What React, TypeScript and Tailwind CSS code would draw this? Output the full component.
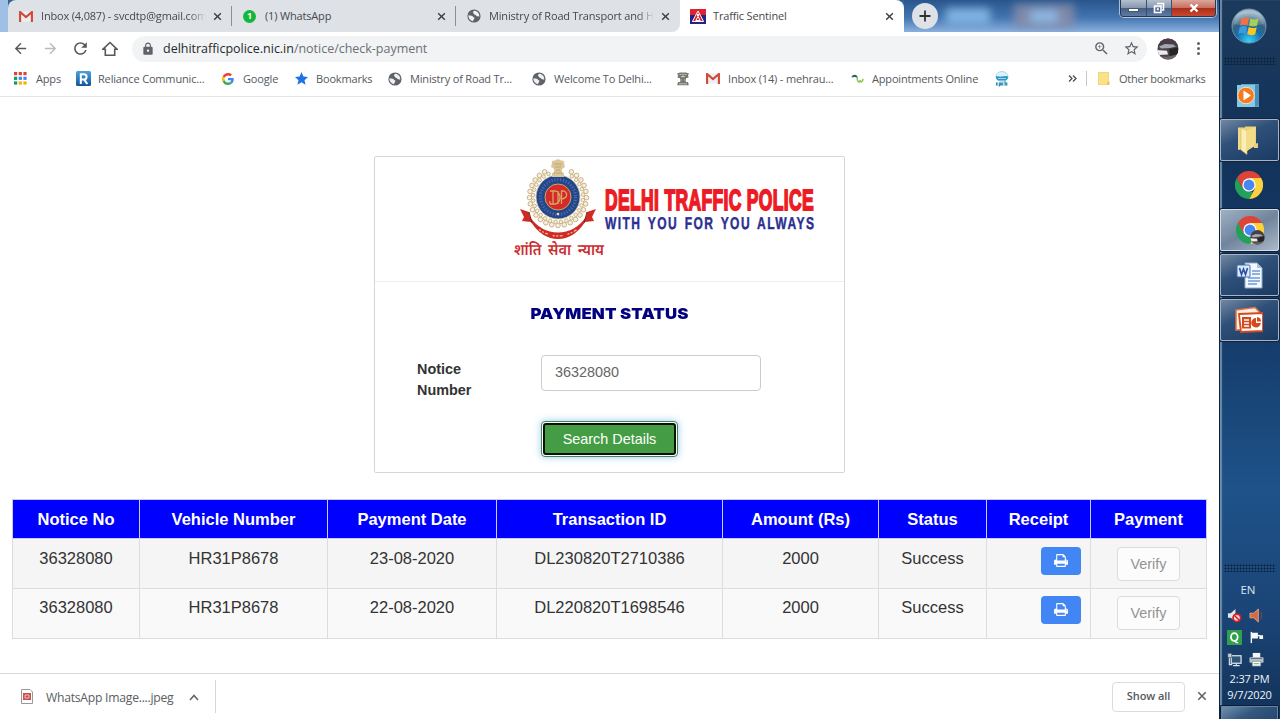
import type { ReactNode } from "react";
import { MdLock, MdStarBorder, MdZoomIn, MdArrowBack, MdArrowForward, MdRefresh } from "react-icons/md";

function XIcon({ className = "" }: { className?: string }) {
  return (
    <svg viewBox="0 0 10 10" className={"shrink-0 " + className}>
      <path d="M1.3 1.3 8.7 8.7M8.7 1.3 1.3 8.7" stroke="currentColor" strokeWidth="1.6" />
    </svg>
  );
}

function Printer() {
  return (
    <svg viewBox="0 0 1664 1792" className="h-[15px] w-[14px]">
      <path
        fill="currentColor"
        d="M384 1536h896v-256h-896v256zM384 896h896v-384h-160q-40 0-68-28t-28-68v-160h-640v640zM1536 960q0-26-19-45t-45-19-45 19-19 45 19 45 45 19 45-19 19-45zM1664 960v416q0 13-9.500 22.500t-22.500 9.500h-224v160q0 40-28 68t-68 28h-960q-40 0-68-28t-28-68v-160h-224q-13 0-22.500-9.500t-9.500-22.500v-416q0-79 56.500-135.500t135.500-56.500h64v-544q0-40 28-68t68-28h672q40 0 88 20t76 48l152 152q28 28 48 76t20 88v256h64q79 0 135.500 56.500t56.500 135.500z"
      />
    </svg>
  );
}

function Gmail() {
  return (
    <svg viewBox="0 0 14 11" className="h-[11px] w-[14px]">
      <rect x="1" y="0.5" width="12" height="10" fill="#eceff1" />
      <path d="M1.1 11V1L7 6l5.9-5v10" fill="none" stroke="#d14836" strokeWidth="2.1" />
    </svg>
  );
}

function Globe() {
  return (
    <svg viewBox="0 0 14 14" className="h-[14px] w-[14px]">
      <circle cx="7" cy="7" r="6.6" fill="#5f6368" />
      <path d="M1.500 6.300c2.600.3 4 .4 4.300 1.300.2.8 1.800.3 1.600 1.700-.1 1.200-1.400 1.300-1.300 2.900C3.500 11.800 1.200 9.500 1.500 6.300zM7.600 1.700c-1.700.8-2.100 1.500-1.300 2.300.9.7.4 1.600 1.600 1.700 1.300 0 1.200 1.400 2.400 1.500 1 .1 1.200.6 2 .2.2-2.900-1.700-5.300-4.700-5.700z" fill="#eef0f2" />
    </svg>
  );
}

function AppsGrid() {
  const colors = ["#db4437", "#db4437", "#db4437", "#0f9d58", "#4285f4", "#4285f4", "#0f9d58", "#f4b400", "#f4b400"];
  return (
    <svg viewBox="0 0 13 13" className="h-[13px] w-[13px]">
      {colors.map((c, i) => (
        <rect key={i} x={(i % 3) * 4.7} y={Math.floor(i / 3) * 4.7} width="3.2" height="3.2" fill={c} />
      ))}
    </svg>
  );
}

function Reliance() {
  return (
    <svg viewBox="0 0 15 15" className="h-[15px] w-[15px]">
      <defs>
        <linearGradient id="rel" x1="0" y1="0" x2="0" y2="1">
          <stop offset="0" stopColor="#4aa3dc" />
          <stop offset="1" stopColor="#15539e" />
        </linearGradient>
      </defs>
      <rect width="15" height="15" rx="1.500" fill="url(#rel)" />
      <path d="M4.800 13V3.200h3.200a2.500 2.500 0 0 1 0 5.200H5m3 0 3.300 4.600" fill="none" stroke="#fff" strokeWidth="2" />
    </svg>
  );
}

function GoogleG() {
  return (
    <svg viewBox="0 0 48 48" className="h-3 w-3">
      <path fill="#EA4335" d="M24 9.500c3.540 0 6.710 1.220 9.210 3.600l6.850-6.850C35.900 2.380 30.470 0 24 0 14.620 0 6.510 5.380 2.560 13.220l7.980 6.190C12.430 13.720 17.740 9.500 24 9.500z" />
      <path fill="#4285F4" d="M46.980 24.550c0-1.570-.15-3.090-.38-4.550H24v9.020h12.940c-.58 2.960-2.260 5.480-4.780 7.180l7.730 6c4.510-4.180 7.090-10.360 7.090-17.650z" />
      <path fill="#FBBC05" d="M10.530 28.590A14.500 14.500 0 0 1 9.770 24c0-1.600.27-3.140.76-4.590l-7.980-6.190A24 24 0 0 0 0 24c0 3.880.92 7.540 2.560 10.780z" />
      <path fill="#34A853" d="M24 48c6.480 0 11.930-2.130 15.890-5.810l-7.730-6c-2.150 1.450-4.920 2.300-8.160 2.300-6.260 0-11.570-4.220-13.470-9.910l-7.980 6.190C6.510 42.620 14.620 48 24 48z" />
    </svg>
  );
}

function BlueStar() {
  return (
    <svg viewBox="0 0 24 24" className="h-[13px] w-[13px]">
      <path d="M12 0l3.500 8.400 8.500.7-6.500 5.900 2 8.500L12 19l-7.500 4.500 2-8.500L0 9.100l8.500-.7z" fill="#1a73e8" />
    </svg>
  );
}

function Emblem() {
  return (
    <svg viewBox="0 0 14 14" className="h-[14px] w-[14px]">
      <path d="M1 1.500 4 .5h6l3 1-1 2 .7 2L10 6.300v.5l-.3 3.200h2.300l.8 3.300H1.200L2 10h2.300L4 6.300 1.300 5.500l.9-2z" fill="#77776f" />
      <path d="M3.500 2.500h2m3 0h2M5 4.500h4M7 1.500v4M4.500 8h1.500m2 0h1.500M3 11.800h8" stroke="#d5d5ce" strokeWidth="0.800" />
    </svg>
  );
}

function Leaf() {
  return (
    <svg viewBox="0 0 14 12" className="h-3 w-[14px]">
      <path d="M.5 4.500C1 1 6.500.6 6.800 5 5 3.600 2.500 3.600 .5 4.500z" fill="#1c6b54" />
      <path d="M6 4.500C6.500 9.500 8.500 10.500 9.300 7c.4 2.800 2.600 2.600 2.700-1.300" fill="none" stroke="#8cc34b" strokeWidth="1.500" />
    </svg>
  );
}

function Cpcb() {
  return (
    <svg viewBox="0 0 14 16" className="h-4 w-[14px]">
      <ellipse cx="7" cy="5.500" rx="6" ry="5" fill="#dff2fa" stroke="#7cc5e2" strokeWidth="0.600" />
      <path d="M.8 5.500c2-1 4 .6 6.200 0s4-.8 6.200 0c-.3 2-1 3.200-2.200 4H3C1.800 8.700 1 7.500 .8 5.500z" fill="#2798c4" />
      <path d="M3 7.500h8" stroke="#fff" strokeWidth="0.600" />
      <path d="M3 12H1.500v2H3m1.300 1.500v-3.500h1.500v2H4.300m4.200-2H7v2h1.500m1.500-3.800v3.800h1.800v-2H10" fill="none" stroke="#2083b0" strokeWidth="1.100" />
    </svg>
  );
}

function Sentinel() {
  return (
    <svg viewBox="0 0 16 15" className="h-[15px] w-4">
      <rect width="16" height="6" fill="#e0222c" />
      <rect y="6" width="16" height="9" fill="#22248c" />
      <path d="M8 2l5.600 10.500H2.400z" fill="#e0222c" stroke="#fff" strokeWidth="1" />
      <circle cx="8" cy="6" r="1.200" fill="#fff" />
      <path d="M5.800 11.500 8 7.500l2.200 4z" fill="none" stroke="#fff" strokeWidth="1" />
    </svg>
  );
}

function Avatar({ size }: { size: string }) {
  return (
    <svg viewBox="0 0 22 22" className={size}>
      <defs>
        <clipPath id="av"><circle cx="11" cy="11" r="10.500" /></clipPath>
      </defs>
      <g clipPath="url(#av)">
        <rect width="22" height="22" fill="#4a4447" />
        <path d="M0 0h22v7L12 5 3 8H0z" fill="#4c3d43" />
        <path d="M2 8.500 8 6l8 .5 3 2-6 1.500L4 10.500z" fill="#a3a7b2" />
        <path d="M0 12l10 .8 1 3.700-10 .5z" fill="#eceaf2" />
        <path d="M12 11l9-1.500V16l-8 3z" fill="#252427" />
        <path d="M0 18.500l10 .3L22 16v6H0z" fill="#6b6664" />
      </g>
    </svg>
  );
}

function Tab({ icon, title, active = false, sep = false, first = false }: { icon: ReactNode; title: string; active?: boolean; sep?: boolean; first?: boolean }) {
  return (
    <div
      className={
        "flex h-8 shrink-0 items-center text-[#45494d] " +
        (first ? "w-[224px] rounded-tl-lg pl-[11px] " : active ? "w-[224px] rounded-tr-lg pl-[10px] " : "w-[224px] pl-[11px] ") +
        (active ? "bg-white" : "bg-[#dee1e6]")
      }
    >
      <div className={"flex shrink-0 items-center " + (active ? "w-[23px]" : "w-[22px]")}>{icon}</div>
      <div
        className={
          "w-[165px] shrink-0 overflow-hidden whitespace-nowrap text-[11px] leading-4 tracking-[-0.170px] " +
          (title.length > 20 ? "[mask-image:linear-gradient(to_right,black_90%,transparent)]" : "")
        }
      >
        {title}
      </div>
      <XIcon className="ml-[7px] h-[9px] w-[9px] text-[#3c4043]" />
      {sep && <div className="ml-[9px] h-5 w-px shrink-0 bg-[#8c9094]" />}
    </div>
  );
}

function Bookmark({ icon, cell, slot, children }: { icon: ReactNode; cell: string; slot: string; children?: string }) {
  return (
    <div className={"flex shrink-0 items-center " + cell}>
      <div className={"flex shrink-0 items-center " + slot}>{icon}</div>
      <span className="whitespace-nowrap">{children}</span>
    </div>
  );
}

function TitleBar() {
  return (
    <div className="flex h-8 bg-[linear-gradient(to_bottom,#2f5f97,#5f8fc6_70%,#8fb4e0)]">
      <div className="h-8 w-2 shrink-0 bg-[#9fbfe4]" />
      <Tab first sep icon={<Gmail />} title="Inbox (4,087) - svcdtp@gmail.com" />
      <Tab
        sep
        icon={<span className="flex h-[13px] w-[13px] items-center justify-center rounded-full bg-[#12b83a] text-[9px] font-bold text-white">1</span>}
        title="(1) WhatsApp"
      />
      <div className="flex bg-white">
        <div className="overflow-hidden rounded-br-lg"><Tab icon={<Globe />} title="Ministry of Road Transport and H" /></div>
      </div>
      <Tab active icon={<Sentinel />} title="Traffic Sentinel" />
      <div className="flex flex-1 items-start justify-between overflow-hidden bg-[linear-gradient(to_bottom,#28558c,#4475b0_55%,#8ab0de)] pr-[3px]">
        <div className="flex items-center">
          <div className="mt-[3px] ml-2 flex h-[26px] w-[26px] items-center justify-center rounded-full bg-[#dee1e6]">
            <svg viewBox="0 0 12 12" className="h-3 w-3"><path d="M6 .5v11M.5 6h11" stroke="#333" strokeWidth="1.800" /></svg>
          </div>
          <div className="mt-[2px] ml-2 h-4 w-11 bg-[#8fc3ef] opacity-80 blur-[4px]" />
          <div className="mt-[2px] ml-6 flex h-6 w-[60px] items-center justify-center bg-[#8e8fa8] opacity-80 blur-[4px]">
            <div className="h-3 w-7 bg-[#9ecbf2]" />
          </div>
        </div>
        <div className="flex h-[17px] w-[96px] overflow-hidden rounded-b-[4px] border border-t-0 border-[#27384f] shadow-[0_0_0_1px_rgba(220,232,245,0.700)]">
          <div className="flex w-[26px] items-end justify-center border-r border-[#3c4f69] bg-[linear-gradient(to_bottom,#b4bfce,#8496af_50%,#445d81_50%,#607ba3)] pb-1">
            <div className="h-[4px] w-[11px] border border-[#4a566a] bg-white" />
          </div>
          <div className="flex w-[25px] items-center justify-center border-r border-[#3c4f69] bg-[linear-gradient(to_bottom,#b4bfce,#8496af_50%,#445d81_50%,#607ba3)]">
            <svg viewBox="0 0 12 12" className="h-3 w-3">
              <path d="M4 1.500h6.500v6.500H9M1.500 4h6.500v6.500h-6.500z" fill="none" stroke="#fff" strokeWidth="1.600" />
              <rect x="3.800" y="6.200" width="2" height="2" fill="#fff" />
            </svg>
          </div>
          <div className="flex flex-1 items-center justify-center bg-[linear-gradient(to_bottom,#dda69c,#c56f60_50%,#ad2b18_50%,#c9492f)]">
            <svg viewBox="0 0 12 10" className="h-[10px] w-3"><path d="M2.500 1.500l7 7M9.500 1.500l-7 7" stroke="#fff" strokeWidth="2.400" /></svg>
          </div>
        </div>
      </div>
    </div>
  );
}

function AddressBar() {
  return (
    <div className="flex h-8 items-center bg-white pt-px">
      <div className="flex w-[132px] shrink-0 items-center pl-[12px] text-[#54585d]">
        <MdArrowBack className="h-[17px] w-[17px]" />
        <MdArrowForward className="ml-[13px] h-[17px] w-[17px] text-[#b9bbbe]" />
        <MdRefresh className="ml-[12px] h-[19px] w-[19px]" />
        <svg viewBox="0 0 16 16" className="ml-[12px] h-4 w-4">
          <path d="M1 8.200 8 1.500l7 6.700h-2.300v6H3.300v-6z" fill="none" stroke="currentColor" strokeWidth="1.600" />
        </svg>
      </div>
      <div className="flex h-[26px] w-[1015px] shrink-0 items-center rounded-full bg-[#f1f3f4] pl-[9px] text-[#5f6368]">
        <MdLock className="h-[14px] w-[14px]" />
        <span className="ml-2 pt-px text-[12.500px] leading-4 tracking-[-0.020px] whitespace-nowrap text-[#6b7075]"><span className="text-[#27292c]">delhitrafficpolice.nic.in</span>/notice/check-payment</span>
        <MdZoomIn className="ml-auto h-[17px] w-[17px]" />
        <MdStarBorder className="mr-[7px] ml-[13px] h-[17px] w-[17px]" />
      </div>
      <div className="ml-[10px]"><Avatar size="h-[22px] w-[22px]" /></div>
      <div className="ml-[18px] flex flex-col gap-[2px]">
        <i className="h-[3px] w-[3px] rounded-full bg-[#5f6368]" />
        <i className="h-[3px] w-[3px] rounded-full bg-[#5f6368]" />
        <i className="h-[3px] w-[3px] rounded-full bg-[#5f6368]" />
      </div>
    </div>
  );
}

function Bookmarks() {
  return (
    <div className="flex h-[33px] shrink-0 items-center border-b border-[#e4e5e6] bg-white pb-[3px] pl-[14px] text-[11px] leading-4 tracking-[-0.170px] text-[#55595e]">
      <Bookmark icon={<AppsGrid />} cell="w-[62px]" slot="w-[22px]">Apps</Bookmark>
      <Bookmark icon={<Reliance />} cell="w-[146px]" slot="w-[22px]">Reliance Communic...</Bookmark>
      <Bookmark icon={<GoogleG />} cell="w-[73px]" slot="w-[21px]">Google</Bookmark>
      <Bookmark icon={<BlueStar />} cell="w-[93px]" slot="w-[21px]">Bookmarks</Bookmark>
      <Bookmark icon={<Globe />} cell="w-[144px]" slot="w-[22px]">Ministry of Road Tr...</Bookmark>
      <Bookmark icon={<Globe />} cell="w-[144px]" slot="w-[22px]">Welcome To Delhi...</Bookmark>
      <Bookmark icon={<Emblem />} cell="w-[30px]" slot="w-[20px]" />
      <Bookmark icon={<Gmail />} cell="w-[145px]" slot="w-[22px]">Inbox (14) - mehrau...</Bookmark>
      <Bookmark icon={<Leaf />} cell="w-[144px]" slot="w-[21px]">Appointments Online</Bookmark>
      <Bookmark icon={<Cpcb />} cell="w-[73px]" slot="w-[20px]" />
      <svg viewBox="0 0 9 7" className="h-[7px] w-[9px]"><path d="M1 .5l3 3-3 3M5 .5l3 3-3 3" fill="none" stroke="#4a4d51" strokeWidth="1.300" /></svg>
      <div className="ml-[9px] h-[15px] w-px bg-[#c4c7ca]" />
      <svg viewBox="0 0 12 13" className="ml-[11px] h-[13px] w-3">
        <rect x="0.500" y="0.500" width="10" height="12" fill="#fbe18a" stroke="#f3d678" />
        <path d="M9 12.500V10.500L11.500 9.500v3z" fill="#e8c04b" />
      </svg>
      <span className="ml-[9px] tracking-[-0.250px] whitespace-nowrap">Other bookmarks</span>
    </div>
  );
}

function PoliceLogo() {
  const leaves = Array.from({ length: 25 }, (_, i) => ((-62 + (i * 304) / 24) * Math.PI) / 180);
  return (
    <svg viewBox="0 0 304 104" className="h-[104px] w-[304px] shrink-0 overflow-visible" textRendering="geometricPrecision">
      <g fill="none" stroke="#c4a97a">
        {leaves.map((a, i) => (
          <g key={i} strokeWidth="0.900">
            <circle cx={45 + Math.cos(a) * 28.5} cy={39 + Math.sin(a) * 28.5} r="2.300" fill="#f7efdc" />
            <circle cx={45 + Math.cos(a + 0.1) * 25} cy={39 + Math.sin(a + 0.1) * 25} r="1.800" fill="#f7efdc" />
          </g>
        ))}
      </g>
      <circle cx="45" cy="39" r="22" fill="#23478c" stroke="#d8c9a0" strokeWidth="0.800" />
      <circle cx="45" cy="39" r="17.500" fill="none" stroke="#8fa3c0" strokeWidth="3" strokeDasharray="1 1.900" opacity="0.450" />
      <circle cx="45" cy="39" r="13" fill="#d62a28" stroke="#c9a667" strokeWidth="1" />
      <path d="M37 33h6q4 2 4 6.500t-4 6.500h-6M40 33v13M45 33v13M48.500 46V33h2.500q4 2 2 6-2 2-4.500 2M38 46q-2-1-1-3" fill="none" stroke="#d7a662" strokeWidth="1.300" />
      <circle cx="45" cy="56" r="1.300" fill="#e6d9a8" />
      <path d="M39 5q-1-3 3-2.500 3-2.500 6 0 4-.5 3 2.500l1 4-3 2v4h2v4H39v-4h2v-4l-3-2z" fill="#dcc79b" />
      <path d="M41 6h8M42 9h6M43 12h4M40 15h10" stroke="#b89a64" strokeWidth="0.700" />
      <path d="M7 51l9 3 1 5q11 15.500 28 15.500T73 59l1-5 9-3-4 8 2 4-9 1q-11 17-27 17T18 64l-9-1 2-4z" fill="#cf2b22" />
      <path d="M16 54l3 11M74 54l-3 11" stroke="#7e2018" strokeWidth="1" />
      <path d="M26 71.500q19 13 38 0" fill="none" stroke="#f0b79d" strokeWidth="1.300" strokeDasharray="2 1.500 2 1.500 3 5" />
      <text x="1" y="97" textLength="90" fill="#cb2c30" className="[font-family:'Noto_Sans_Devanagari','Noto_Sans','Lohit_Devanagari',sans-serif] text-[15.500px] font-semibold [word-spacing:3px]" lengthAdjust="spacingAndGlyphs">शांति सेवा न्याय</text>
      <g transform="translate(92 52.300) scale(1 1.360)">
        <text x="0" y="0" textLength="209" lengthAdjust="spacingAndGlyphs" fill="#ed1c24" stroke="#ed1c24" strokeWidth="1.300" className="[font-family:'Liberation_Sans_Narrow','Liberation_Sans',sans-serif] text-[21.500px] font-bold tracking-[0.400px]">DELHI TRAFFIC POLICE</text>
      </g>
      <g transform="translate(92 71) scale(0.860 1.220)">
        <text x="0" y="0" textLength="243" lengthAdjust="spacing" fill="#2b2e92" stroke="#2b2e92" strokeWidth="0.350" className="[font-family:'Liberation_Sans',sans-serif] text-[14px] font-bold [word-spacing:2px]">WITH YOU FOR YOU ALWAYS</text>
      </g>
    </svg>
  );
}

const rows = [
  ["36328080", "HR31P8678", "23-08-2020", "DL230820T2710386", "2000", "Success"],
  ["36328080", "HR31P8678", "22-08-2020", "DL220820T1698546", "2000", "Success"],
];
const headers = ["Notice No", "Vehicle Number", "Payment Date", "Transaction ID", "Amount (Rs)", "Status", "Receipt", "Payment"];

function ResultTable() {
  return (
    <table className="mt-[26px] ml-[12px] w-[1195px] table-fixed border-collapse text-center text-[16.500px] leading-[22px] text-[#333]">
      <colgroup>
        <col className="w-[127px]" />
        <col className="w-[188px]" />
        <col className="w-[169px]" />
        <col className="w-[226px]" />
        <col className="w-[156px]" />
        <col className="w-[108px]" />
        <col className="w-[104px]" />
        <col className="w-[116px]" />
      </colgroup>
      <thead>
        <tr className="h-[39px] bg-[#0000fe] text-white">
          {headers.map((h) => (
            <th key={h} className="border border-[#ccccf0] p-0 pb-px font-bold">{h}</th>
          ))}
        </tr>
      </thead>
      <tbody>
        {rows.map((r, i) => (
          <tr key={i} className={i === 0 ? "h-[50px] bg-[#f5f5f5] align-top" : "h-[50px] bg-[#f9f9f9] align-top"}>
            {r.map((c, j) => (
              <td key={j} className={"border border-[#ddd] p-0 " + (i === 0 ? "pt-[8px]" : "pt-[7px]")}>{c}</td>
            ))}
            <td className={"border border-[#ddd] p-0 pr-[9px] " + (i === 0 ? "pt-[8px]" : "pt-[7px]")}>
              <button className="ml-auto flex h-[28px] w-[40px] items-center justify-center rounded-[4px] bg-[#4285f4] pb-[2px] text-white">
                <Printer />
              </button>
            </td>
            <td className={"border border-[#ddd] p-0 " + (i === 0 ? "pt-[8px]" : "pt-[7px]")}>
              <button className="mx-auto block h-[34px] w-[63px] rounded-[4px] border border-[#dcdcdc] bg-[#fcfcfc] text-[14.400px] text-[#949494]">Verify</button>
            </td>
          </tr>
        ))}
      </tbody>
    </table>
  );
}

function PageContent() {
  return (
    <main className="h-[576px] shrink-0 bg-white pt-[59px] [font-family:'Liberation_Sans',Arial,sans-serif]">
      <section className="ml-[374px] h-[317px] w-[471px] rounded-[2px] border border-[#d6d6d6]">
        <div className="flex h-[125px] border-b border-[#eeeeee] pt-px pl-[138px]">
          <PoliceLogo />
        </div>
        <h1 className="mt-[21px] scale-x-[1.120] text-center text-[15px] leading-[22px] font-black tracking-[0.100px] whitespace-nowrap text-[#000080] [font-family:Inter,sans-serif]">PAYMENT STATUS</h1>
        <div className="mt-[30px] flex pl-[42px]">
          <label className="w-[124px] pt-[4px] text-[14.400px] leading-[20.500px] font-bold text-[#333]">Notice<br />Number</label>
          <div className="flex h-[36px] w-[220px] items-center rounded-[4px] border border-[#ccc] pl-[13px] text-[14.400px] text-[#666]">36328080</div>
        </div>
        <button className="mt-[21px] ml-[166px] flex h-[36px] w-[137px] items-center justify-center rounded-[4px] border border-[#4c8050] bg-white p-px shadow-[0_0_6px_1px_rgba(120,195,240,0.650)]">
          <span className="flex h-full w-full items-center justify-center rounded-[3px] border-2 border-[#061206] bg-[#449d44] pt-[2px] text-[14.400px] text-white">Search Details</span>
        </button>
      </section>
      <ResultTable />
    </main>
  );
}

function DownloadBar() {
  return (
    <footer className="flex flex-1 items-center border-t border-[#d8dadc] bg-white">
      <svg viewBox="0 0 12 15" className="ml-[21px] h-[15px] w-3">
        <path d="M.5.5h8.500L11.500 3v11.500H.5z" fill="#fff" stroke="#999" />
        <rect x="2" y="4" width="8" height="7" fill="#c74f4f" />
        <path d="M4 6h4v3H4z" fill="none" stroke="#f2c7c7" strokeWidth="0.900" />
      </svg>
      <span className="ml-[13px] w-[143px] pt-[3px] text-[12.200px] tracking-[-0.260px] whitespace-nowrap text-[#5a5d61]">WhatsApp Image....jpeg</span>
      <svg viewBox="0 0 10 7" className="mt-px h-[7px] w-[10px]"><path d="M1 6l4-4.500L9 6" fill="none" stroke="#5f6368" strokeWidth="1.500" /></svg>
      <div className="ml-[16px] h-[33px] w-px bg-[#d5d7d9]" />
      <div className="ml-auto flex h-[30px] w-[73px] items-center justify-center rounded-[4px] border border-[#dadce0] pb-px text-[11px] font-semibold tracking-[-0.100px] text-[#55595e]">Show all</div>
      <XIcon className="mr-[12px] mb-[2px] ml-[12px] h-[10px] w-[10px] text-[#5f6368]" />
    </footer>
  );
}

function ChromeIcon() {
  return (
    <svg viewBox="0 0 48 48" className="h-7 w-7">
      <path d="M44.800 12A24 24 0 0 1 24 48l10.400-18L24 12z" fill="#fdd13c" />
      <path d="M24 48A24 24 0 0 1 3.200 12l10.400 18L24 36h7z" fill="#23a15b" />
      <path d="M3.200 12A24 24 0 0 1 44.800 12H24L13.600 30z" fill="#dc4437" />
      <circle cx="24" cy="24" r="11.500" fill="#fff" />
      <circle cx="24" cy="24" r="9.300" fill="#4688f1" />
    </svg>
  );
}

function TaskButton({ children, lit = false, className }: { children: ReactNode; lit?: boolean; className: string }) {
  return (
    <div
      className={
        "flex h-[42px] w-[59px] items-center justify-center rounded-[2px] border shadow-[0_0_0_1px_#10233a] " +
        (lit
          ? "border-[#d4dce5] bg-[linear-gradient(150deg,#9fb0c2,#70859d_50%,#aab8c7)] "
          : "border-[#a5b5c7] bg-[linear-gradient(155deg,#7188a2,#2f5079_40%,#1a3a62)] ") +
        className
      }
    >
      {children}
    </div>
  );
}

function Grip({ className }: { className: string }) {
  return <div className={"h-[8px] w-[52px] shrink-0 bg-[radial-gradient(circle,#0b1c33_0.500px,transparent_1.300px)] bg-size-[3px_3px] " + className} />;
}

function Taskbar() {
  return (
    <aside className="flex h-[719px] w-[61px] shrink-0 flex-col items-center overflow-hidden border-l border-[#0d2238] bg-[linear-gradient(to_bottom,#1c3b5c,#12325a_20%,#143a68_45%,#1e5289_68%,#1b4577_85%,#123258)] pr-px shadow-[inset_2px_0_1px_#6e8ca8]">
      <svg viewBox="0 0 36 36" className="mt-[8px] mr-px h-9 w-9 shrink-0">
        <defs>
          <radialGradient id="orb" cx="0.500" cy="0.950" r="0.850">
            <stop offset="0" stopColor="#35d5ff" />
            <stop offset="0.450" stopColor="#176faa" />
            <stop offset="0.700" stopColor="#37617f" />
            <stop offset="1" stopColor="#9cb6c7" />
          </radialGradient>
        </defs>
        <circle cx="18" cy="18" r="17" fill="url(#orb)" stroke="#6f92aa" strokeWidth="1" />
        <path d="M10.500 11q4-2.500 7.500-.5l-1.500 7q-4-1.700-7.500.3z" fill="#ee5a24" />
        <path d="M19.500 10.500q4 2 8 0l-1.500 7.300q-4 1.700-8-.2z" fill="#96c83c" />
        <path d="M8.700 19.200q4-2 7.500-.3l-1.500 7q-4-1.900-7.500.3z" fill="#3a9be0" />
        <path d="M17.700 19q4 2 8 .2l-1.500 7q-4 2-8-.2z" fill="#fcc522" />
        <path d="M3 16Q4 3 18 2.500 32 3 33 16 18 20 3 16z" fill="#fff" opacity="0.150" />
      </svg>
      <Grip className="mt-[13px]" />
      <svg viewBox="0 0 26 26" className="mt-[18px] mr-[3px] h-[26px] w-[26px] shrink-0">
        <path d="M6 1h18v23H8z" fill="#5da9ce" />
        <path d="M2 2h18v22H2z" fill="#86c9e5" />
        <path d="M20 2l4-1v21l-4 2z" fill="#4890b7" />
        <circle cx="11" cy="12.500" r="8.300" fill="#f47b20" stroke="#f6dfc6" strokeWidth="1" />
        <path d="M8.500 7.500l7.500 5-7.500 5z" fill="#fff" />
      </svg>
      <TaskButton className="mt-[10px] shrink-0">
        <svg viewBox="0 0 24 30" className="mr-[6px] h-[30px] w-6">
          <path d="M3 2.500h9v21L3 25z" fill="#f0d98a" />
          <path d="M10 1.500h11v19l-9 5z" fill="#ecd379" />
          <path d="M6 3l6 2.500v24L6 25z" fill="#fbeeb4" stroke="#d6b95b" strokeWidth="0.600" />
          <path d="M12 5.500l8-3.500v18l-8 6z" fill="#f3dc88" />
          <path d="M19 19l4-1v5h-4z" fill="#e7cf86" />
        </svg>
      </TaskButton>
      <div className="mt-[10px] mr-px shrink-0"><ChromeIcon /></div>
      <TaskButton lit className="mt-[10px] shrink-0">
        <div className="relative"><ChromeIcon /><div className="absolute top-[14px] left-[14px]"><Avatar size="h-[15px] w-[15px]" /></div></div>
      </TaskButton>
      <TaskButton className="mt-[3px] shrink-0">
        <svg viewBox="0 0 28 28" className="h-7 w-7">
          <path d="M9 2h12l5 5v20H9z" fill="#f4f8fd" stroke="#8fabd0" />
          <path d="M21 2v5h5z" fill="#a9c1e2" />
          <path d="M16 10h8M16 13h8M12 17h12M12 20h12M12 23h9" stroke="#6f9bd6" strokeWidth="1.300" />
          <rect x="1" y="4" width="13" height="12" rx="1" fill="#dce9f8" stroke="#3f6db8" />
          <path d="M3.500 7l2 6.500L7.500 8l2 5.500 2-6.500" fill="none" stroke="#2850a0" strokeWidth="1.600" />
        </svg>
      </TaskButton>
      <TaskButton className="mt-[3px] shrink-0">
        <svg viewBox="0 0 28 28" className="mr-[2px] h-7 w-7">
          <path d="M1 4 20 1.500l5 5v17L1 24z" fill="#fbeee7" stroke="#e2703f" strokeWidth="1.500" />
          <path d="M4 8l24-1v18l-22 1z" fill="#fff" stroke="#d6491d" strokeWidth="1.800" />
          <rect x="7" y="11" width="9" height="11.500" fill="#d6491d" />
          <path d="M9 14h5M9 17h5M9 20h5" stroke="#fff" strokeWidth="1.300" />
          <path d="M21 12a4.800 4.800 0 1 0 4.800 5H21z" fill="#d6491d" />
          <path d="M22 11a4.500 4.500 0 0 1 4 4.500h-4z" fill="#d6491d" />
        </svg>
      </TaskButton>
      <Grip className="mt-[223px]" />
      <div className="mt-[10px] pr-[3px] text-[11.500px] leading-4 text-[#dce6f0]">EN</div>
      <div className="mt-[10px] grid shrink-0 grid-cols-[15px_15px] gap-x-[7px] gap-y-[7px] pr-[12px] pl-[3px]">
        <svg viewBox="0 0 16 16" className="h-[15px] w-[15px]">
          <path d="M1 5.500h3L9 1v13L4 10.500H1z" fill="#dfe6ec" />
          <circle cx="10.500" cy="10.500" r="4" fill="#f9dddd" stroke="#d51d24" strokeWidth="1.800" />
          <path d="M8 8l5 5" stroke="#d51d24" strokeWidth="1.600" />
        </svg>
        <svg viewBox="0 0 16 16" className="h-[15px] w-[15px]">
          <path d="M1 5.500h4L10 1v14l-5-4.500H1z" fill="#d66a42" stroke="#eab69c" strokeWidth="0.800" />
          <path d="M12.500 4q2 4 0 8" fill="none" stroke="#5d4a58" strokeWidth="1.300" />
        </svg>
        <svg viewBox="0 0 16 16" className="h-[15px] w-[15px]">
          <rect width="16" height="16" fill="#31a04a" />
          <ellipse cx="7.800" cy="7.500" rx="3.600" ry="4.200" fill="none" stroke="#fff" strokeWidth="1.900" />
          <path d="M8.300 11.500q.8 2.200 3.700 2" fill="none" stroke="#fff" strokeWidth="1.600" />
        </svg>
        <svg viewBox="0 0 16 16" className="h-[15px] w-[15px]">
          <path d="M2.500 2v12" stroke="#f2f5f8" strokeWidth="1.500" />
          <path d="M3 3h6.500v6H3zM11 5.500h4v4h-4z" fill="#f6f8fa" />
          <path d="M9 6h3" stroke="#f6f8fa" strokeWidth="1.500" />
        </svg>
        <svg viewBox="0 0 16 16" className="h-[15px] w-[15px]">
          <rect x="4.500" y="4" width="10.500" height="8" fill="#2d5577" stroke="#dfe6ec" strokeWidth="1.300" />
          <path d="M6.500 14.500h7M10 12v2.500M2.500 6v7.500h3" stroke="#dfe6ec" strokeWidth="1.200" fill="none" />
          <rect x="1" y="1.500" width="4" height="4.500" fill="#c8d2dc" stroke="#4b5f75" strokeWidth="0.700" />
        </svg>
        <svg viewBox="0 0 16 16" className="h-[15px] w-[15px]">
          <path d="M4 1h8v5H4z" fill="#f4f6f8" />
          <rect x="0.500" y="5.500" width="15" height="6" rx="1" fill="#b9c1c9" />
          <path d="M2 7h12" stroke="#5a6978" />
          <path d="M3.500 10h9v5h-9z" fill="#fff" stroke="#7b8793" strokeWidth="0.700" />
          <path d="M5 12.500h6" stroke="#48b060" />
        </svg>
      </div>
      <div className="mt-[4px] text-center text-[11px] leading-[16px] tracking-[-0.180px] whitespace-nowrap text-[#eef3f8]">2:37 PM<br />9/7/2020</div>
      <div className="mt-[2px] h-4 w-[59px] shrink-0 rounded-[1px] border border-[#0c1f38] bg-[linear-gradient(150deg,#7794b1,#35587f_50%,#24466f)] shadow-[inset_0_0_0_1px_#6583a2]" />
    </aside>
  );
}

export default function App() {
  return (
    <div className="flex h-[719px] w-[1280px] overflow-hidden bg-white [font-family:'Open_Sans','Noto_Sans',sans-serif]">
      <div className="flex w-[1219px] shrink-0 flex-col">
        <TitleBar />
        <AddressBar />
        <Bookmarks />
        <PageContent />
        <DownloadBar />
      </div>
      <Taskbar />
    </div>
  );
}
